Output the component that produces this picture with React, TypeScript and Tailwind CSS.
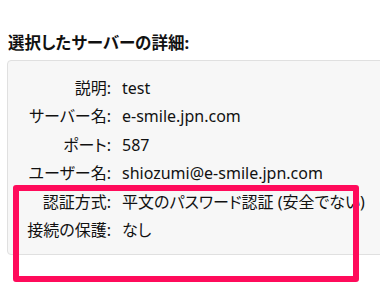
// Selected-server details panel with a highlight box drawn over the auth rows.

const FONT = {
  fontFamily: '"Noto Sans", "Noto Sans CJK JP", sans-serif',
  fontFeatureSettings: '"palt"',
};

const ROWS: [string, string][] = [
  ['説明:', 'test'],
  ['サーバー名:', 'e-smile.jpn.com'],
  ['ポート:', '587'],
  ['ユーザー名:', 'shiozumi@e-smile.jpn.com'],
  ['認証方式:', '平文のパスワード認証 (安全でない)'],
  ['接続の保護:', 'なし'],
];

export default function App() {
  return (
    <div className="relative h-[283px] w-[380px] overflow-hidden bg-white text-[#111]" style={FONT}>
      <h2 className="pl-[8px] pt-[32px] text-[16.5px] font-bold leading-[22px]">選択したサーバーの詳細:</h2>

      <div className="ml-[7px] mt-[6px] h-[195px] w-[400px] rounded-[4px] border border-[#e0e0e0] bg-[#f7f7f7] pl-[16px] pt-[13px]">
        <div className="grid grid-cols-[87px_1fr] gap-x-[11px] text-[16px] leading-[28.4px]">
          {ROWS.map(([label, value]) => (
            <div key={label} className="contents">
              <span className="whitespace-nowrap text-right">{label}</span>
              <span className="whitespace-nowrap">{value}</span>
            </div>
          ))}
        </div>
      </div>

      {/* annotation highlight */}
      <div className="absolute left-[13px] top-[185px] h-[97px] w-[346px] rounded-[3px] border-[6px] border-[#ff0b5b]" />
    </div>
  );
}
